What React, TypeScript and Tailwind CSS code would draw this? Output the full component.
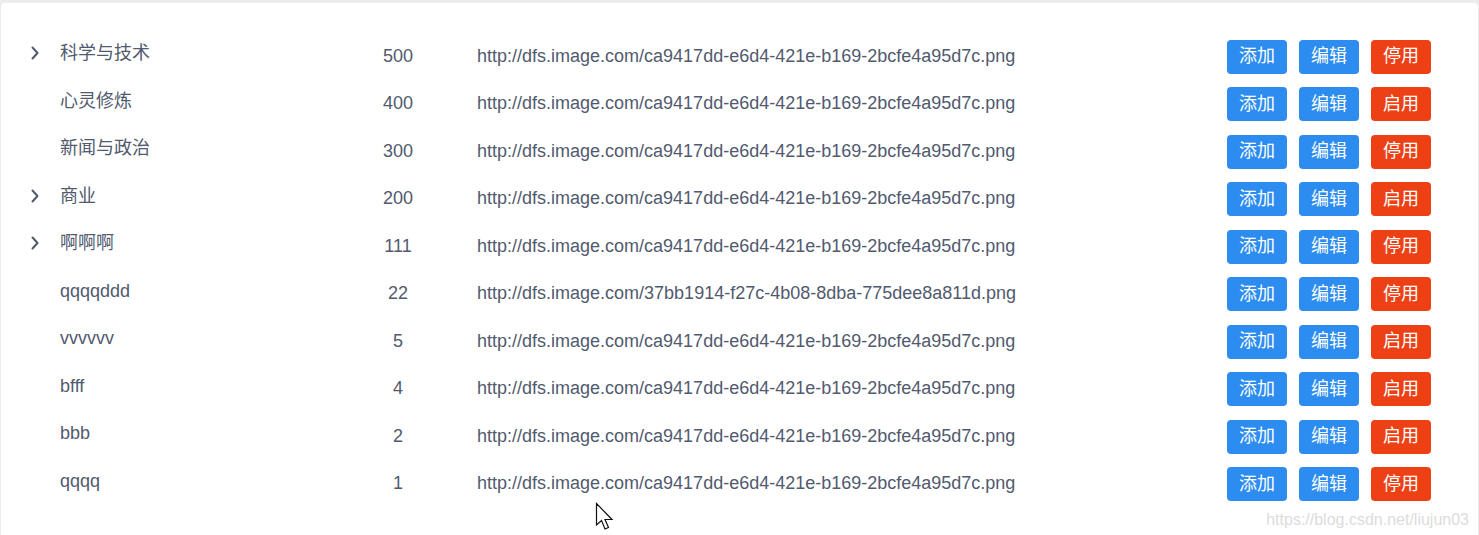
import React from 'react';

const URL_A = 'http://dfs.image.com/ca9417dd-e6d4-421e-b169-2bcfe4a95d7c.png';
const URL_B = 'http://dfs.image.com/37bb1914-f27c-4b08-8dba-775dee8a811d.png';

const rows = [
    { name: '科学与技术', sort: 500, url: URL_A, enabled: true, children: true },
    { name: '心灵修炼', sort: 400, url: URL_A, enabled: false, children: false },
    { name: '新闻与政治', sort: 300, url: URL_A, enabled: true, children: false },
    { name: '商业', sort: 200, url: URL_A, enabled: false, children: true },
    { name: '啊啊啊', sort: 111, url: URL_A, enabled: true, children: true },
    { name: 'qqqqddd', sort: 22, url: URL_B, enabled: true, children: false },
    { name: 'vvvvvv', sort: 5, url: URL_A, enabled: false, children: false },
    { name: 'bfff', sort: 4, url: URL_A, enabled: false, children: false },
    { name: 'bbb', sort: 2, url: URL_A, enabled: false, children: false },
    { name: 'qqqq', sort: 1, url: URL_A, enabled: true, children: false },
];

const Chevron = () => (
    <svg width="12" height="14" viewBox="0 0 12 14" fill="none">
        <path d="M3.5 1.5 L8.5 7 L3.5 12.5" stroke="#515a6e" strokeWidth="2" strokeLinecap="round" strokeLinejoin="round" />
    </svg>
);

const Cursor = () => (
    <svg width="20" height="30" viewBox="0 0 20 30" className="absolute left-[595px] top-[502px]">
        <path d="M1.5 1.5 L1.5 23 L6.5 18.5 L10 27 L13.5 25.5 L10 17.5 L17 17.5 Z" fill="#fff" stroke="#111" strokeWidth="1.2" strokeLinejoin="miter" />
    </svg>
);

export default function App() {
    return (
        <div className="relative h-[535px] w-full bg-[#ececec] pt-[3px] px-[1px] overflow-hidden" style={{ fontFamily: '"Liberation Sans", "Noto Sans CJK SC", sans-serif' }}>
            <div className="h-full bg-white rounded-t-[4px] pt-[29px] text-[18px] text-[#515a6e]">
                {rows.map((row, i) => (
                    <div key={i} className={i % 2 === 0 ? 'flex items-center h-[47px]' : 'flex items-center h-[48px]'}>
                        <div className="w-[59px] flex items-center pl-[28px] mb-[5px]">
                            {row.children && <Chevron />}
                        </div>
                        <div className="w-[270px] mb-[5px] leading-none">{row.name}</div>
                        <div className="w-[136px] text-center leading-none">{row.sort}</div>
                        <div className="flex-1 pl-[11px] leading-none">{row.url}</div>
                        <div className="flex gap-[12px] pr-[47px] mt-[2px]">
                            <button className="w-[60px] h-[34px] rounded-[4px] bg-[#2d8cf0] text-white text-[18px]">添加</button>
                            <button className="w-[60px] h-[34px] rounded-[4px] bg-[#2d8cf0] text-white text-[18px]">编辑</button>
                            <button className="w-[60px] h-[34px] rounded-[4px] bg-[#ed4014] text-white text-[18px]">
                                {row.enabled ? '停用' : '启用'}
                            </button>
                        </div>
                    </div>
                ))}
            </div>
            <div className="absolute right-[10px] bottom-[7px] text-[16px] text-[#dcdcdc] leading-none">https://blog.csdn.net/liujun03</div>
            <Cursor />
        </div>
    );
}
